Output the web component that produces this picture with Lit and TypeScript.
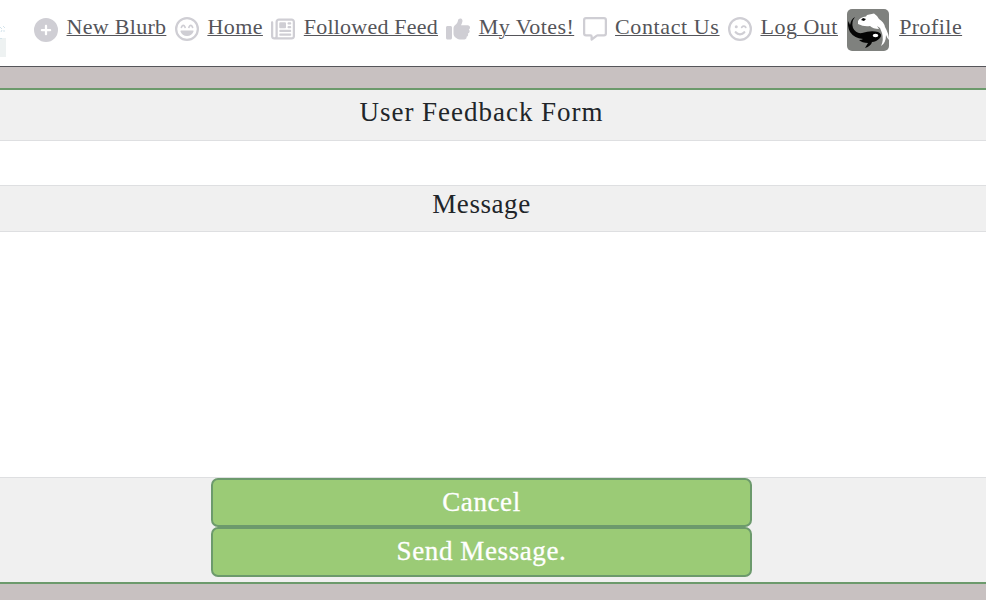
import { LitElement, html, css, svg } from "lit";
import { customElement } from "lit/decorators.js";

const icons: Record<string, unknown> = {
  plus: svg`<path fill-rule="evenodd" d="M256 512A256 256 0 1 0 256 0A256 256 0 1 0 256 512zM232 344V280H168C136 280 136 232 168 232H232V168C232 136 280 136 280 168V232H344C376 232 376 280 344 280H280V344C280 376 232 376 232 344z"/>`,
  laugh: svg`<circle class="line" cx="256" cy="256" r="232"/><path d="M130 290H382C392 290 398 298 395 308C378 366 322 406 256 406S134 366 117 308C114 298 120 290 130 290z"/><path class="thin" d="M136 220Q176 138 216 220M296 220Q336 138 376 220"/>`,
  news: svg`<path d="M168 80c-13.3 0-24 10.7-24 24V408c0 8.4-1.4 16.5-4.1 24H440c13.3 0 24-10.7 24-24V104c0-13.3-10.7-24-24-24H168zM72 480c-39.8 0-72-32.2-72-72V112C0 98.7 10.7 88 24 88s24 10.7 24 24V408c0 13.3 10.7 24 24 24s24-10.7 24-24V104c0-39.8 32.2-72 72-72H440c39.8 0 72 32.2 72 72V408c0 39.8-32.2 72-72 72H72zM176 136c0-13.3 10.7-24 24-24h96c13.3 0 24 10.7 24 24v80c0 13.3-10.7 24-24 24H200c-13.3 0-24-10.7-24-24V136zm200-24h32c13.3 0 24 10.7 24 24s-10.7 24-24 24H376c-13.3 0-24-10.7-24-24s10.7-24 24-24zm0 80h32c13.3 0 24 10.7 24 24s-10.7 24-24 24H376c-13.3 0-24-10.7-24-24s10.7-24 24-24zM200 272H408c13.3 0 24 10.7 24 24s-10.7 24-24 24H200c-13.3 0-24-10.7-24-24s10.7-24 24-24zm0 80H408c13.3 0 24 10.7 24 24s-10.7 24-24 24H200c-13.3 0-24-10.7-24-24s10.7-24 24-24z"/>`,
  thumb: svg`<path d="M313.4 32.9c26 5.2 42.9 30.5 37.7 56.5l-2.3 11.4c-5.3 26.7-15.1 52.1-28.8 75.2H464c26.5 0 48 21.5 48 48c0 18.5-10.5 34.6-25.9 42.6C497 275.4 504 288.9 504 304c0 23.4-16.8 42.9-38.9 47.1c4.4 7.3 6.9 15.8 6.9 24.9c0 21.3-13.9 39.4-33.1 45.6c.7 3.3 1.1 6.8 1.1 10.4c0 26.5-21.5 48-48 48H294.5c-19 0-37.5-5.6-53.3-16.1l-38.5-25.7C176 420.4 160 390.4 160 358.3V247.1c0-29.2 13.3-56.7 36-75l7.4-5.9c26.5-21.2 44.6-51 51.2-84.2l2.3-11.4c5.2-26 30.5-42.9 56.5-37.7zM32 192H96c17.7 0 32 14.3 32 32V448c0 17.7-14.3 32-32 32H32c-17.7 0-32-14.3-32-32V224c0-17.7 14.3-32 32-32z"/>`,
  message: svg`<path class="line" d="M64 24H448Q488 24 488 64V352Q488 392 448 392H309Q302 392 295 397L184 480V416Q184 392 160 392H64Q24 392 24 352V64Q24 24 64 24z"/>`,
  wink: svg`<circle class="line" cx="256" cy="256" r="232"/><circle cx="176" cy="208" r="32"/><path class="line" d="M164 326Q198 368 256 368T348 326"/><path class="thin" d="M292 220Q336 172 380 220"/>`,
};

const links = [
  { label: "New Blurb", icon: "plus", width: 100, track: 0.3, top: 18 },
  { label: "Home", icon: "laugh", width: 55.5, track: 0.43, top: 17 },
  { label: "Followed Feed", icon: "news", width: 134, track: 0.22, top: 17 },
  { label: "My Votes!", icon: "thumb", width: 95.5, track: 0.45, top: 17 },
  { label: "Contact Us", icon: "message", width: 104.5, track: 0.61, top: 17 },
  { label: "Log Out", icon: "wink", width: 77.5, track: 0.51, top: 17 },
];

@customElement("koi-avatar")
class KoiAvatar extends LitElement {
  static styles = css`
    :host { display: block; width: 42px; height: 42px; border-radius: 5px; overflow: hidden; background: #7f817e; }
    svg { display: block; }
  `;
  render() {
    return html`<svg width="42" height="42" viewBox="0 0 42 42">
      <path fill="#fff" d="M11 12Q13 8 19 7.5L20 6L27 4.5L30 7L32 10Q37 13 38 18Q42 25 42 31Q40 29 39 26Q39 34 34 37Q37 31 35 24L33 19L30 17L32 20Q26 20 23 17Q17 18 11 15z"/>
      <path fill="#050505" d="M8 8Q4 13 6 19Q9 25 15 24Q24 21 31 23Q36 25 33 29Q29 33 25 33Q24 37 18 39L21 34Q15 34 12 31Q15 31 16 30Q7 29 3 23Q0 17 1.5 12L3 16Q4 10 8 8z"/>
      <path fill="#050505" d="M14 11L16 9L19 10L17 12z"/>
      <ellipse cx="28.5" cy="26.5" rx="2.8" ry="1.8" fill="#fff"/>
    </svg>`;
  }
}

@customElement("app-root")
class AppRoot extends LitElement {
  static styles = css`
    :host { display: flex; flex-direction: column; height: 600px; overflow: hidden; background: #c8c1c1; color: #212529; font-family: "Liberation Serif", serif; }
    .nav { box-sizing: border-box; height: 67px; flex: none; display: flex; align-items: flex-start; background: #fff; border-bottom: 1px solid #55555a; }
    .logo { width: 6px; height: 57px; margin-right: 28px; flex: none; display: block; }
    .item { display: flex; align-items: flex-start; flex: none; margin-right: 8.4px; }
    .icon { width: 24px; height: 24px; margin-right: 8.5px; fill: #cfced4; flex: none; overflow: visible; }
    .line { fill: none; stroke: #cfced4; stroke-width: 48; stroke-linecap: round; stroke-linejoin: round; }
    .thin { fill: none; stroke: #cfced4; stroke-width: 36; stroke-linecap: round; }
    .link { display: block; margin-top: 14px; height: 30px; line-height: 26px; font-size: 22px; color: #55555a; white-space: nowrap; text-decoration: underline 1px; text-underline-offset: 1px; }
    .profile { width: 63px; letter-spacing: 0.44px; }
    .avatar { margin: 9px 10px 0 0.8px; }
    .card { box-sizing: border-box; height: 496px; flex: none; margin-top: 21px; display: flex; flex-direction: column; background: #fff; border: solid #6c9a6c; border-width: 2px 0; }
    .row { box-sizing: border-box; flex: none; padding-right: 23px; background: #f0f0f0; text-align: center; font-size: 27px; border-bottom: 1px solid #dedfe1; }
    .title { height: 51px; line-height: 45px; letter-spacing: 0.98px; }
    .subject { height: 44px; }
    .label { height: 47px; line-height: 36px; letter-spacing: 0.57px; border-top: 1px solid #dedfe1; }
    .message { flex: 1; }
    .footer { box-sizing: border-box; height: 105px; flex: none; padding-right: 23px; background: #f0f0f0; border-top: 1px solid #dedfe1; display: flex; flex-direction: column; align-items: center; }
    .button { box-sizing: border-box; width: 541px; height: 49px; padding: 0; border: 2px solid #6c9a6c; border-radius: 7px; background: #9bcb76; color: #fff; font: 27px "Liberation Serif", serif; letter-spacing: 0.6px; -webkit-text-stroke: 0.3px #fff; }
    .send { height: 50px; padding-bottom: 1px; }
  `;
  render() {
    return html`
      <nav class="nav">
        <svg class="logo" viewBox="0 0 6 57"><path fill="#eef2f2" d="M0 38H6V57H0z"/><path fill="none" stroke="#d4e4ec" d="M0 38.5H2M0 27L2 29M3 26L5 28M1 32L2 30M4 32V30"/></svg>
        ${links.map((l) => html`<div class="item">
          <svg class="icon" viewBox="0 0 512 512" style="margin-top:${l.top}px">${icons[l.icon]}</svg>
          <a class="link" style="width:${l.width}px;letter-spacing:${l.track}px">${l.label}</a>
        </div>`)}
        <koi-avatar class="avatar"></koi-avatar>
        <a class="link profile">Profile</a>
      </nav>
      <main class="card">
        <div class="row title">User Feedback Form</div>
        <div class="subject"></div>
        <div class="row label">Message</div>
        <div class="message"></div>
        <div class="footer">
          <button class="button">Cancel</button>
          <button class="button send">Send Message.</button>
        </div>
      </main>`;
  }
}
